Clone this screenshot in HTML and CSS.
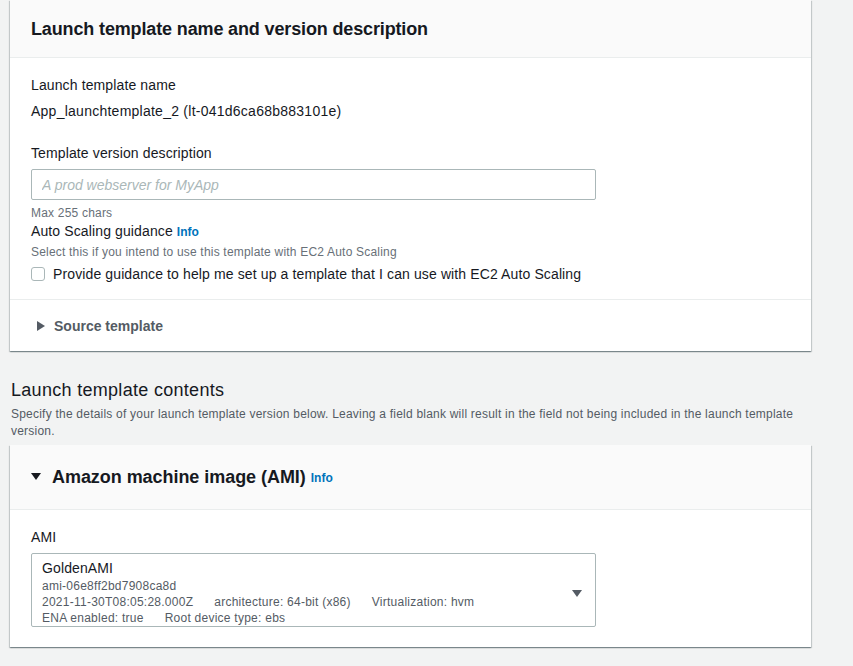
FILE: index.html
```html
<!DOCTYPE html>
<html lang="en">
<head>
<meta charset="utf-8">
<title>Launch template</title>
<link rel="stylesheet" href="styles.css">
</head>
<body>
<main class="page">
  <section class="card card-first">
    <header class="card-header">
      <h2 class="card-title">Launch template name and version description</h2>
    </header>
    <div class="card-body">
      <div class="field">
        <div class="label">Launch template name</div>
        <div class="value">App_launchtemplate_2 (lt-041d6ca68b883101e)</div>
      </div>
      <div class="field field-desc">
        <label class="label" for="desc">Template version description</label>
        <input id="desc" class="text-input" type="text" placeholder="A prod webserver for MyApp">
        <div class="constraint">Max 255 chars</div>
      </div>
      <div class="field field-guidance">
        <div class="label-sm">Auto Scaling guidance <a class="info" href="#">Info</a></div>
        <div class="hint">Select this if you intend to use this template with EC2 Auto Scaling</div>
        <label class="check-row">
          <span class="checkbox"></span>
          <span>Provide guidance to help me set up a template that I can use with EC2 Auto Scaling</span>
        </label>
      </div>
    </div>
    <div class="expander">
      <svg class="caret-right" width="8" height="10" viewBox="0 0 8 10"><path d="M0 0 L8 5 L0 10 Z" fill="#545b64"/></svg>
      <span>Source template</span>
    </div>
  </section>

  <section class="section-head">
    <h2 class="section-title">Launch template contents</h2>
    <p class="section-desc">Specify the details of your launch template version below. Leaving a field blank will result in the field not being included in the launch template version.</p>
  </section>

  <section class="card">
    <header class="card-header card-header-ami">
      <svg class="caret-down" width="10" height="7" viewBox="0 0 10 7"><path d="M0 0 L10 0 L5 7 Z" fill="#16191f"/></svg>
      <h2 class="card-title">Amazon machine image (AMI)</h2>
      <a class="info info-lg" href="#">Info</a>
    </header>
    <div class="card-body card-body-ami">
      <div class="label">AMI</div>
      <div class="select">
        <div class="select-text">
          <div class="select-name">GoldenAMI</div>
          <div class="select-line">ami-06e8ff2bd7908ca8d</div>
          <div class="select-line"><span class="tag">2021-11-30T08:05:28.000Z</span><span class="tag">architecture: 64-bit (x86)</span><span class="tag">Virtualization: hvm</span></div>
          <div class="select-line"><span class="tag">ENA enabled: true</span><span class="tag">Root device type: ebs</span></div>
        </div>
        <svg class="select-caret" width="10" height="7" viewBox="0 0 10 7"><path d="M0 0 L10 0 L5 7 Z" fill="#545b64"/></svg>
      </div>
    </div>
  </section>
</main>
</body>
</html>
```
FILE: styles.css
```css
* { box-sizing: border-box; }
html, body { margin: 0; padding: 0; }
body {
  background: #f2f3f3;
  font-family: "Liberation Sans", Arial, sans-serif;
  color: #16191f;
  font-size: 14px;
  line-height: 22px;
  letter-spacing: 0.12px;
}
.page {
  width: 801px;
  margin-left: 10px;
  padding-bottom: 20px;
}
.card {
  background: #fff;
  box-shadow: 0 1px 1px 0 rgba(0,28,36,.3), 1px 1px 1px 0 rgba(0,28,36,.15), -1px 1px 1px 0 rgba(0,28,36,.15);
}
.card-header {
  background: #fafafa;
  border-bottom: 1px solid #eaeded;
  padding: 18px 21px 17px;
}
.card-title {
  margin: 0;
  font-size: 18px;
  line-height: 22px;
  font-weight: 700;
  letter-spacing: -0.14px;
}
.card-body {
  padding: 16px 21px 14px;
  border-bottom: 1px solid #eaeded;
}
.field + .field { margin-top: 20px; }
.field-guidance { margin-top: 0 !important; }
.label { display: block; line-height: 22px; }
.value { margin-top: 4px; letter-spacing: 0.25px; }
.text-input {
  display: block;
  margin-top: 5px;
  width: 565px;
  height: 31px;
  border: 1px solid #aab7b8;
  border-radius: 2px;
  padding: 0 10px;
  font: inherit;
  font-size: 14px;
}
.text-input::placeholder { color: #aab7b8; font-style: italic; }
.constraint { font-size: 12px; line-height: 16px; color: #687078; margin-top: 5px; letter-spacing: 0.2px; }
.label-sm { line-height: 20px; }
.info { color: #0073bb; font-size: 12px; font-weight: 700; text-decoration: none; letter-spacing: 0; }
.hint { font-size: 12px; line-height: 16px; color: #687078; margin-top: 2px; letter-spacing: 0.2px; }
.check-row {
  display: flex;
  align-items: center;
  gap: 8px;
  margin-top: 3px;
  line-height: 22px;
}
.checkbox {
  width: 14px; height: 14px;
  border: 1px solid #aab7b8;
  border-radius: 3px;
  background: #fff;
  flex: none;
}
.expander {
  display: flex;
  align-items: center;
  padding: 15px 21px 14px;
  color: #545b64;
  font-weight: 700;
  letter-spacing: 0;
}
.caret-right { margin-left: 6px; margin-right: 9px; }
.section-head { padding: 28px 1px 0; }
.section-title { margin: 0; font-size: 18px; line-height: 22px; font-weight: 400; letter-spacing: 0.3px; }
.section-desc { margin: 5px 0 5px; font-size: 12px; line-height: 17px; color: #545b64; letter-spacing: 0.22px; }
.card-header-ami {
  display: flex;
  align-items: center;
  padding: 19px 21px 20px;
}
.card-header-ami .card-title { line-height: 24px; letter-spacing: -0.05px; }
.caret-down { margin-left: 0; margin-right: 11px; }
.info-lg { margin-left: 5px; margin-top: 3px; }
.card-body-ami { padding: 16px 21px 20px; border-bottom: 0; }
.select {
  margin-top: 5px;
  width: 565px;
  border: 1px solid #aab7b8;
  border-radius: 2px;
  padding: 4px 10px 0;
  display: flex;
  align-items: center;
}
.select-text { flex: 1; }
.select-name { line-height: 20px; }
.select-line { font-size: 12px; line-height: 16px; color: #545b64; letter-spacing: 0.25px; }
.select-line:first-of-type { margin-top: 1px; }
.tag + .tag { margin-left: 21px; }
.select-caret { margin-right: 3px; margin-top: 2px; }
```
